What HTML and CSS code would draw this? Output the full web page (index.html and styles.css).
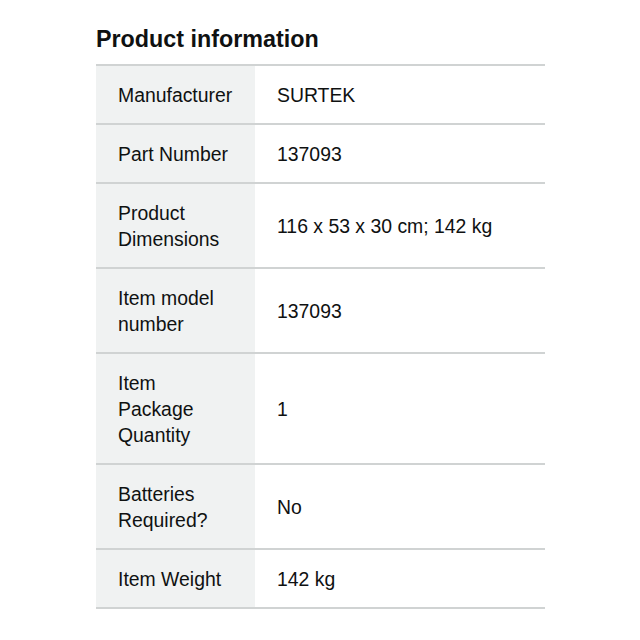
FILE: index.html
```html
<!DOCTYPE html>
<html>
<head>
<meta charset="utf-8">
<link rel="stylesheet" href="styles.css">
</head>
<body>
<div class="page">
  <h2 class="title">Product information</h2>
  <table class="info">
    <tr><th>Manufacturer</th><td>SURTEK</td></tr>
    <tr><th>Part Number</th><td>137093</td></tr>
    <tr><th>Product Dimensions</th><td>116 x 53 x 30 cm; 142 kg</td></tr>
    <tr><th>Item model number</th><td>137093</td></tr>
    <tr><th>Item Package Quantity</th><td>1</td></tr>
    <tr><th>Batteries Required?</th><td>No</td></tr>
    <tr><th>Item Weight</th><td>142 kg</td></tr>
  </table>
</div>
</body>
</html>
```
FILE: styles.css
```css
html, body {
  margin: 0;
  padding: 0;
  background: #fff;
}
body {
  font-family: "Liberation Sans", Arial, sans-serif;
  color: #0f1111;
}
.page {
  padding: 25px 95px 0 96px;
}
.title {
  margin: 0 0 11px 0;
  font-size: 23.3px;
  font-weight: 700;
  line-height: 28px;
  color: #0f1111;
}
.info {
  width: 449px;
  border-collapse: collapse;
  border-top: 2px solid #d0d3d3;
}
.info tr {
  border-bottom: 2px solid #d0d3d3;
}
.info th, .info td {
  text-align: left;
  font-weight: 400;
  font-size: 19.4px;
  line-height: 26px;
  padding: 15.5px 22px;
  vertical-align: middle;
}
.info th {
  width: 115px;
  background: #f0f2f2;
}
```
